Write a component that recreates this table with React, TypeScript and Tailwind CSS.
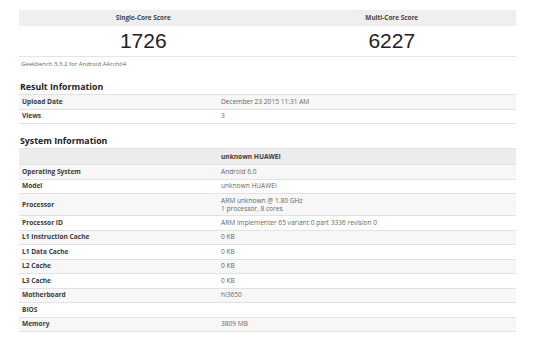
const resultRows = [
  { label: "Upload Date", value: "December 23 2015 11:31 AM" },
  { label: "Views", value: "3" },
];

const systemRows: { label: string; value: string[] }[] = [
  { label: "Operating System", value: ["Android 6.0"] },
  { label: "Model", value: ["unknown HUAWEI"] },
  { label: "Processor", value: ["ARM unknown @ 1.80 GHz", "1 processor, 8 cores"] },
  { label: "Processor ID", value: ["ARM implementer 65 variant 0 part 3336 revision 0"] },
  { label: "L1 Instruction Cache", value: ["0 KB"] },
  { label: "L1 Data Cache", value: ["0 KB"] },
  { label: "L2 Cache", value: ["0 KB"] },
  { label: "L3 Cache", value: ["0 KB"] },
  { label: "Motherboard", value: ["hi3650"] },
  { label: "BIOS", value: [""] },
  { label: "Memory", value: ["3809 MB"] },
];

const Row = ({ label, value, striped }: { label: string; value: string[]; striped: boolean }) => (
  <div
    className={`flex border-t border-[#e2e2e2] ${striped ? "bg-[#f7f7f7]" : "bg-white"} ${
      value.length > 1 ? "min-h-[22px]" : "h-[14.5px]"
    } items-center`}
  >
    <div className="w-[202px] pl-[3px] font-bold text-[#3a3a3a] text-[6.6px]">{label}</div>
    <div className="flex-1 text-[#666] text-[6.6px] leading-[8px]">
      {value.map((v, i) => (
        <div key={i}>{v}</div>
      ))}
    </div>
  </div>
);

export default function App() {
  return (
    <div
      className="w-[550px] h-[352px] bg-white overflow-hidden"
      style={{ fontFamily: '"Open Sans", "Liberation Sans", sans-serif' }}
    >
      <div className="ml-[19px] w-[497px] pt-[10px]">
        {/* scores */}
        <div className="grid grid-cols-2 border-b border-[#e4e4e4]">
          {[
            { title: "Single-Core Score", score: "1726" },
            { title: "Multi-Core Score", score: "6227" },
          ].map((s) => (
            <div key={s.title} className="flex flex-col">
              <div className="h-[16px] bg-[#efefef] flex items-center justify-center font-bold text-[6.4px] text-[#444]">
                {s.title}
              </div>
              <div
                className="h-[30px] flex items-center justify-center text-[21px] text-[#222]"
                style={{ fontFamily: '"Liberation Sans", Arial, sans-serif' }}
              >
                {s.score}
              </div>
            </div>
          ))}
        </div>
        <div className="pl-[2px] pt-[3px] text-[6px] text-[#666]">Geekbench 3.3.2 for Android AArch64</div>

        {/* result information */}
        <h2 className="mt-[12px] pl-[1px] font-bold text-[8.8px] text-[#222] h-[13px]">Result Information</h2>
        <div className="border-b border-[#e2e2e2]">
          {resultRows.map((r, i) => (
            <Row key={r.label} label={r.label} value={[r.value]} striped={i % 2 === 0} />
          ))}
        </div>

        {/* system information */}
        <h2 className="mt-[11px] pl-[1px] font-bold text-[8.8px] text-[#222] h-[13px]">System Information</h2>
        <div className="border-b border-[#e2e2e2]">
          <div className="flex h-[16px] items-center bg-[#ececec] border-t border-[#e2e2e2]">
            <div className="w-[202px]" />
            <div className="flex-1 font-bold text-[6.6px] text-[#3a3a3a]">unknown HUAWEI</div>
          </div>
          {systemRows.map((r, i) => (
            <Row key={r.label} label={r.label} value={r.value} striped={i % 2 === 0} />
          ))}
        </div>
      </div>
    </div>
  );
}
